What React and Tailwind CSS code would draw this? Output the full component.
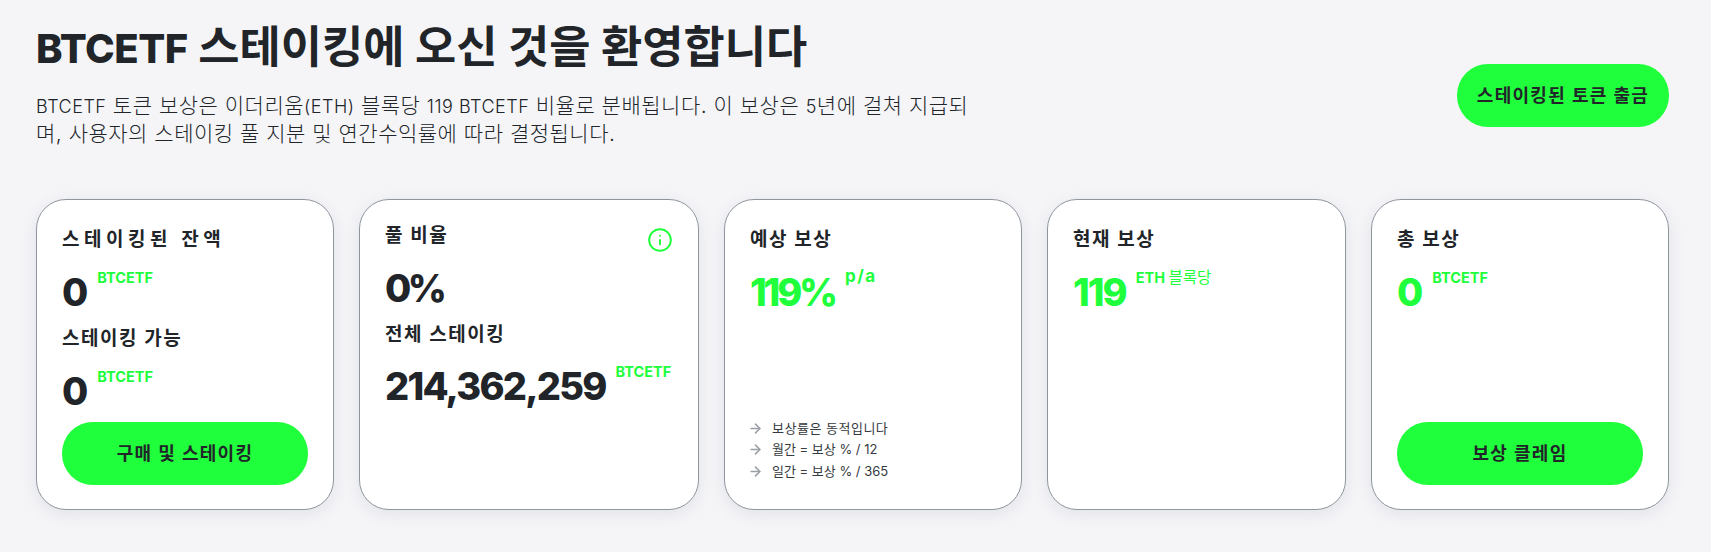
import React from "react";
import { ArrowRight, Info } from "lucide-react";

function Title({ children, className = "tracking-[1.5px]" }) {
  return <h3 className={"text-[19px] leading-[26px] font-semibold text-[#212529] " + className}>{children}</h3>;
}

function Value({ num, unit, green, className = "mt-[10px]", numClass = "tracking-[-1px]", unitClass = "ml-[10px] mt-[5px] text-[14.5px]" }) {
  return (
    <div className={"flex items-start " + className}>
      <span className={"text-[38px] leading-[58px] font-extrabold " + numClass + " " + (green ? "text-[#20ff3c]" : "text-[#212529]")}>{num}</span>
      <span className={"leading-[20px] font-bold text-[#20ff3c] " + unitClass}>{unit}</span>
    </div>
  );
}

function Btn({ children, className = "" }) {
  return (
    <button className={"h-[63px] rounded-[31px] bg-[#20ff3c] text-[18px] font-semibold tracking-[1.3px] text-[#212529] " + className}>
      {children}
    </button>
  );
}

function Card({ w, children }) {
  return (
    <div className={"flex h-[311px] flex-col rounded-[30px] border border-[#8f969e] bg-white pt-[27px] pr-[25px] pb-[24px] pl-[25px] shadow-[0_4px_16px_rgba(60,70,90,0.10)] " + w}>
      {children}
    </div>
  );
}

export default function App() {
  return (
    <div className="h-[552px] overflow-hidden bg-[#f5f5f8] pt-[17px] pr-[42px] pl-[36px] font-['Inter','Noto_Sans_CJK_KR',sans-serif]">
      <div className="flex items-start justify-between">
        <div className="w-[940px]">
          <h1 className="text-[44.8px] leading-[60px] font-bold text-[#212529]">
            <span className="text-[40px] leading-none font-extrabold tracking-[-0.5px]">BTCETF</span> 스테이킹에 오신 것을 환영합니다
          </h1>
          <p className="mt-[15px] w-[935px] text-[21px] leading-[28px] font-light tracking-[0.5px] text-[#212529]">
            <span className="text-[18px] leading-none">BTCETF</span> 토큰 보상은 이더리움<span className="text-[18px] leading-none">(ETH)</span> 블록당 <span className="text-[18px] leading-none">119 BTCETF</span> 비율로 분배됩니다. 이 보상은 <span className="text-[18px] leading-none">5</span>년에 걸쳐 지급되며, 사용자의 스테이킹 풀 지분 및 연간수익률에 따라 결정됩니다.
          </p>
        </div>
        <Btn className="mt-[47px] w-[212px]">스테이킹된 토큰 출금</Btn>
      </div>

      <div className="mt-[51px] flex gap-[25px]">
        <Card w="w-[298px]">
          <Title className="tracking-[4.5px]">스테이킹된 잔액</Title>
          <Value num="0" unit="BTCETF" />
          <div className="mt-[5px]"><Title>스테이킹 가능</Title></div>
          <Value num="0" unit="BTCETF" />
          <Btn className="mt-auto w-full">구매 및 스테이킹</Btn>
        </Card>

        <Card w="w-[340px]">
          <div className="flex items-start justify-between">
            <div className="-mt-[4px]"><Title>풀 비율</Title></div>
            <Info className="h-[26px] w-[26px] text-[#20ff3c]" strokeWidth={1.8} />
          </div>
          <Value num="0%" className="mt-[6px]" numClass="tracking-[-3.5px]" />
          <div className="mt-[5px]"><Title>전체 스테이킹</Title></div>
          <Value num="214,362,259" unit="BTCETF" className="mt-[9px]" numClass="tracking-[-1.8px]" />
        </Card>

        <Card w="w-[298px]">
          <Title>예상 보상</Title>
          <Value num="119%" unit="p/a" green numClass="tracking-[-3.2px]" unitClass="ml-[10px] mt-[3px] text-[17px] tracking-[1.5px]" />
          <ul className="mt-auto mb-[3px] flex flex-col text-[13px] leading-[21.5px] text-[#343a40]">
            <li className="flex items-center tracking-[0.5px]">
              <ArrowRight className="mr-[9px] -ml-[2px] h-[15px] w-[15px] text-[#9a9fa5]" strokeWidth={2.4} />
              보상률은 동적입니다
            </li>
            <li className="flex items-center">
              <ArrowRight className="mr-[9px] -ml-[2px] h-[15px] w-[15px] text-[#9a9fa5]" strokeWidth={2.4} />
              월간 = 보상 % / 12
            </li>
            <li className="flex items-center">
              <ArrowRight className="mr-[9px] -ml-[2px] h-[15px] w-[15px] text-[#9a9fa5]" strokeWidth={2.4} />
              일간 = 보상 % / 365
            </li>
          </ul>
        </Card>

        <Card w="w-[299px]">
          <Title>현재 보상</Title>
          <Value
            num="119"
            green
            numClass="tracking-[-2px]"
            unit={<>ETH <span className="text-[15.5px] font-normal">블록당</span></>}
          />
        </Card>

        <Card w="w-[298px]">
          <Title>총 보상</Title>
          <Value num="0" unit="BTCETF" green />
          <Btn className="mt-auto w-full">보상 클레임</Btn>
        </Card>
      </div>
    </div>
  );
}
